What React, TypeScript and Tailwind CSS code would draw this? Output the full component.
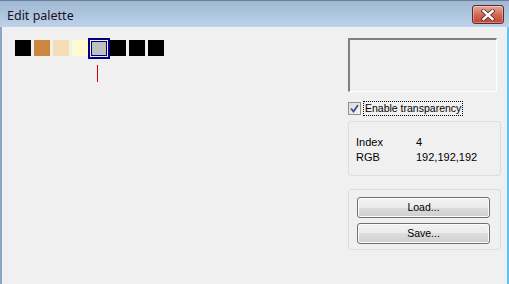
import React from 'react';

const swatches = ['#000000', '#cd853f', '#f5deb3', '#fffacd', '#c0c0c0', '#000000', '#000000', '#000000'];

function CloseButton() {
  return (
    <div className="w-[32px] h-[19px] rounded-[3px] border border-[#5c2a2a] bg-gradient-to-b from-[#e7a99c] via-[#d26a58] to-[#c0422c] flex items-center justify-center shadow-[inset_0_0_0_1px_rgba(255,255,255,0.35)]">
      <svg width="14" height="12" viewBox="0 0 14 12">
        <path d="M2.5 2 L11.5 10 M11.5 2 L2.5 10" stroke="#5a2a2a" strokeWidth="4" strokeLinecap="square" />
        <path d="M2.5 2 L11.5 10 M11.5 2 L2.5 10" stroke="#ffffff" strokeWidth="2.4" strokeLinecap="square" />
      </svg>
    </div>
  );
}

function WinButton({ label }: { label: string }) {
  return (
    <div className="h-[21px] w-[133px] rounded-[3px] border border-[#707070] bg-[linear-gradient(#f2f2f2_0%,#ebebeb_50%,#dddddd_50%,#cfcfcf_100%)] flex items-center justify-center text-[10.5px] text-black shadow-[inset_0_0_0_1px_#fcfcfc]">
      {label}
    </div>
  );
}

export default function App() {
  return (
    <div className="w-[509px] h-[284px] flex flex-col bg-[#f0f0f0] font-['Liberation_Sans',Arial,sans-serif] overflow-hidden">
      <div className="h-[27px] flex items-start border-t border-[#6a7f98] bg-gradient-to-b from-[#a0b7d2] to-[#bcd3ea]">
        <span className="mt-[6px] ml-[7px] text-[12.5px] text-[#1a1020] font-['Noto_Sans',sans-serif]">Edit palette</span>
        <div className="ml-auto mt-[4px] mr-[5px]">
          <CloseButton />
        </div>
      </div>

      <div className="flex-1 flex border-l-2 border-l-[#8aa6c4] border-r-2 border-r-[#5cc4ee]">
        <div className="flex-1 pt-[10px] pl-[13px]">
          <div className="flex items-center h-[22px]">
            {swatches.map((c, i) =>
              i === 4 ? (
                <div key={i} className="w-[22px] h-[21px] border-2 border-[#000080] p-px -ml-[3px]">
                  <div className="w-full h-full border border-[#000080]" style={{ backgroundColor: c }} />
                </div>
              ) : (
                <div key={i} className="w-[16px] h-[16px] mr-[3px]" style={{ backgroundColor: c }} />
              )
            )}
          </div>
          <div className="ml-[82px] mt-[6px] w-px h-[17px] bg-[#d40000]" />
        </div>

        <div className="w-[153px] mr-[6px] pt-[11px] flex flex-col">
          <div className="w-[149px] h-[54px] border-t-2 border-l-2 border-[#808080] border-b border-r border-b-white border-r-white" />

          <div className="mt-[9px] flex items-center h-[15px]">
            <div className="w-[13px] h-[13px] border border-[#8e8f8f] bg-gradient-to-br from-[#dcdcdc] to-[#f7f7f7] flex items-center justify-center">
              <svg width="9" height="9" viewBox="0 0 9 9">
                <path d="M1 4.5 L3.5 7.5 L8 1" fill="none" stroke="#3c4f96" strokeWidth="1.8" />
              </svg>
            </div>
            <span className="ml-[2px] px-px h-[15px] leading-[13px] border border-dotted border-black text-[10.5px] text-black">
              Enable transparency
            </span>
          </div>

          <div className="mt-[5px] h-[55px] rounded-[3px] border border-[#d5dfe5] pt-[13px] pl-[7px] text-[11px] text-black leading-[15px]">
            <div className="flex">
              <span className="w-[60px]">Index</span>
              <span>4</span>
            </div>
            <div className="flex">
              <span className="w-[60px]">RGB</span>
              <span>192,192,192</span>
            </div>
          </div>

          <div className="mt-[13px] h-[61px] rounded-[3px] border border-[#d5dfe5] pt-[7px] pl-[8px] flex flex-col gap-[5px]">
            <WinButton label="Load..." />
            <WinButton label="Save..." />
          </div>
        </div>
      </div>
    </div>
  );
}
